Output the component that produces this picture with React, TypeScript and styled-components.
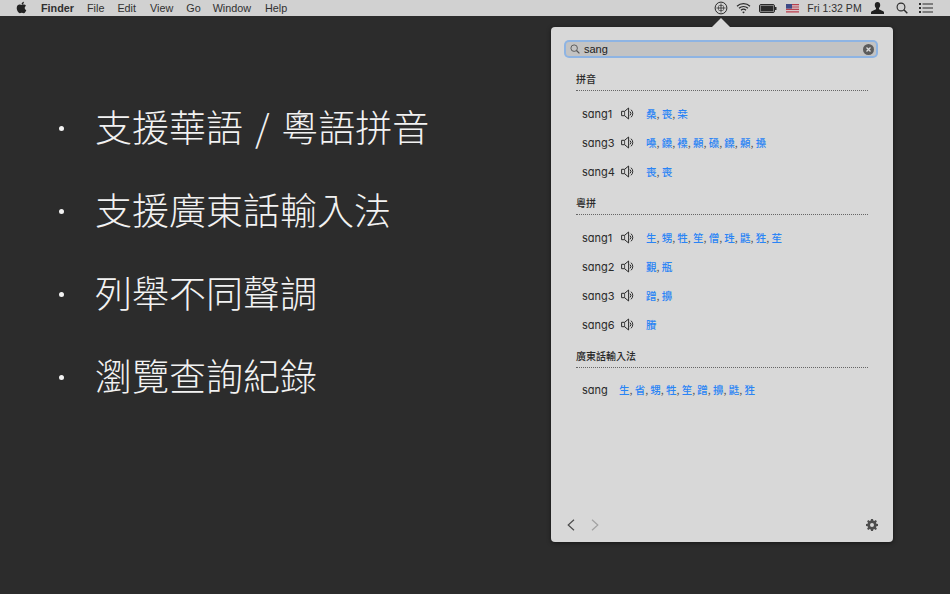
import * as React from 'react';
import styled, { createGlobalStyle } from 'styled-components';
import { FaApple } from 'react-icons/fa';

const GlobalStyle = createGlobalStyle`
  html, body {
    margin: 0;
    padding: 0;
    height: 100%;
    background: #2c2c2c;
    overflow: hidden;
  }
  #root {
    height: 100%;
  }
`;

const CJK = `"Noto Sans CJK TC", "Noto Sans CJK SC", sans-serif`;

const Desktop = styled.div`
  width: 950px;
  height: 594px;
  display: flex;
  flex-direction: column;
  background: #2c2c2c;
`;

const MenuBar = styled.header`
  height: 16px;
  flex: none;
  display: flex;
  align-items: center;
  background: #d1d1d1;
  font-family: "Liberation Sans", Arial, sans-serif;
  font-size: 10.8px;
  color: #303030;
  padding: 0 13px 0 15px;
`;

const AppleMark = styled.span`
  display: flex;
  width: 26px;
  margin-bottom: 1px;
  font-size: 13px;
  color: #222;
`;

const MenuItem = styled.span<{ $bold?: boolean; $gap: number }>`
  margin-right: ${({ $gap }) => $gap}px;
  font-weight: ${({ $bold }) => ($bold ? 700 : 400)};
  white-space: nowrap;
`;

const StatusArea = styled.div`
  margin-left: auto;
  display: flex;
  align-items: center;
`;

const StatusSlot = styled.span<{ $width: number }>`
  display: flex;
  justify-content: center;
  align-items: center;
  width: ${({ $width }) => $width}px;
`;

const Clock = styled.span`
  width: 61px;
  font-size: 10.5px;
  text-align: center;
  white-space: nowrap;
`;

const Main = styled.main`
  flex: 1;
  display: flex;
  align-items: flex-start;
`;

const Slide = styled.ul`
  width: 551px;
  flex: none;
  margin: 0;
  padding: 85px 0 0 59px;
  box-sizing: border-box;
  list-style: none;
  display: flex;
  flex-direction: column;
`;

const SlideItem = styled.li`
  height: 83px;
  display: flex;
  align-items: flex-start;
  color: #f2f2f2;
  font-family: ${CJK};
  font-weight: 300;
  font-size: 37px;
  line-height: 50px;
  word-spacing: 3.7px;
  white-space: pre;
`;

const Dot = styled.span`
  width: 5px;
  height: 5px;
  margin-top: 25px;
  margin-right: 31px;
  border-radius: 50%;
  background: #f2f2f2;
  flex: none;
`;

const Popover = styled.section`
  position: relative;
  width: 342px;
  height: 515px;
  margin-top: 11px;
  box-sizing: border-box;
  padding-top: 15px;
  background: #d8d8d8;
  border-radius: 4px;
  box-shadow: 0 1px 4px rgba(0, 0, 0, 0.5);
  display: flex;
  flex-direction: column;
  font-family: Inter, "Noto Sans", sans-serif;
  color: #222;
`;

const Caret = styled.span`
  position: absolute;
  top: -9px;
  left: 161px;
  width: 0;
  height: 0;
  border-left: 9px solid transparent;
  border-right: 9px solid transparent;
  border-bottom: 9px solid #d8d8d8;
`;

const SearchBox = styled.div`
  height: 14px;
  flex: none;
  margin: 0 17px 0 15px;
  display: flex;
  align-items: center;
  gap: 4px;
  padding: 0 2px 0 4px;
  background: #c3c3c3;
  border-radius: 3px;
  box-shadow: 0 0 0 2px #8eb4e3;
  font-size: 11px;
  color: #1c1c1c;
`;

const SearchText = styled.span`
  flex: 1;
  font-family: "Liberation Sans", Arial, sans-serif;
`;

const Results = styled.div`
  flex: 1;
  display: flex;
  flex-direction: column;
  padding: 16px 25px 0 25px;
`;

const SectionTitle = styled.h2<{ $top: number }>`
  margin: ${({ $top }) => $top}px 0 0;
  height: 18px;
  line-height: 14px;
  font-family: ${CJK};
  font-size: 10px;
  font-weight: 500;
  color: #2a2a2a;
  border-bottom: 1px dotted #666;
`;

const Rows = styled.div<{ $plain?: boolean }>`
  display: flex;
  flex-direction: column;
  padding-top: ${({ $plain }) => ($plain ? 7 : 8)}px;
`;

const Row = styled.div`
  height: 29px;
  display: flex;
  align-items: center;
  padding-left: 6px;
`;

const Syllable = styled.span<{ $width: number }>`
  width: ${({ $width }) => $width}px;
  flex: none;
  font-size: 11px;
  font-feature-settings: "cv11";
  color: #2a2a2a;
`;

const Chars = styled.span`
  margin-left: 12px;
  font-family: ${CJK};
  font-size: 10.5px;
  font-weight: 500;
  color: #2a84f5;
  white-space: nowrap;
`;

const Sep = styled.span`
  color: #555;
  font-weight: 400;
  margin-right: 2.25px;
`;

const Footer = styled.footer`
  height: 34px;
  flex: none;
  display: flex;
  align-items: center;
  padding: 0 15px 0 16px;
`;

const NavButton = styled.span`
  display: flex;
  margin-right: 16px;
`;

const Gear = styled.span`
  display: flex;
  margin-left: auto;
`;

const AddonIcon = () => (
  <svg width="14" height="14" viewBox="0 0 14 14" fill="none" stroke="#2b2b2b">
    <circle cx="7" cy="7" r="5.9" strokeWidth="1" />
    <path d="M7 2.5v9M2.5 7h9" strokeWidth="0.8" />
    <rect x="4.5" y="4.5" width="5" height="5" rx="1" strokeWidth="0.6" />
  </svg>
);

const WifiIcon = () => (
  <svg width="15" height="12" viewBox="0 0 15 12" fill="none" stroke="#2b2b2b" strokeWidth="1.2">
    <path d="M1 4.2a9.4 9.4 0 0 1 13 0M3 6.3a6.5 6.5 0 0 1 9 0M5 8.3a3.6 3.6 0 0 1 5 0" />
    <path d="M7.5 11.4 6.2 10a1.9 1.9 0 0 1 2.6 0z" fill="#2b2b2b" stroke="none" />
  </svg>
);

const BatteryIcon = () => (
  <svg width="18" height="9" viewBox="0 0 18 9">
    <rect x="0.5" y="0.5" width="15" height="8" rx="1.5" fill="#d3d3d3" stroke="#2b2b2b" />
    <rect x="1.5" y="1.5" width="13" height="6" fill="#2b2b2b" />
    <rect x="16" y="3" width="1.5" height="3" fill="#2b2b2b" />
  </svg>
);

const FlagIcon = () => (
  <svg width="13" height="9" viewBox="0 0 13 9">
    <rect width="13" height="9" fill="#d8c8cc" />
    <path d="M0 .6h13M0 3h13M0 5.4h13M0 7.8h13" stroke="#b8404e" strokeWidth="1.2" />
    <rect width="6" height="4.6" fill="#3d4a86" />
  </svg>
);

const UserIcon = () => (
  <svg width="13" height="12" viewBox="0 0 13 12" fill="#1f1f1f">
    <path d="M6.5 0C4.8 0 3.8 1.3 3.8 3c0 1.3.5 2.4 1.2 3.1v1.1L.8 9.2C.3 9.5 0 9.9 0 10.4V12h13v-1.6c0-.5-.3-.9-.8-1.2L8 7.2V6.1C8.7 5.4 9.2 4.3 9.2 3 9.2 1.3 8.2 0 6.5 0z" />
  </svg>
);

const MagnifierIcon = ({ size, color }: { size: number; color: string }) => (
  <svg width={size} height={size} viewBox="0 0 12 12" fill="none" stroke={color} strokeWidth="1.1">
    <circle cx="5" cy="5" r="3.9" />
    <path d="M7.8 7.8 11.3 11.3" strokeWidth="1.4" />
  </svg>
);

const ListIcon = () => (
  <svg width="14" height="10" viewBox="0 0 14 10" fill="#2b2b2b">
    <path d="M0 0h2v2H0zM0 4h2v2H0zM0 8h2v2H0zM3.5 .5H14v1H3.5zM3.5 4.5H14v1H3.5zM3.5 8.5H14v1H3.5z" />
  </svg>
);

const ClearIcon = () => (
  <svg width="11" height="11" viewBox="0 0 11 11">
    <circle cx="5.5" cy="5.5" r="5.5" fill="#5c5c5c" />
    <path d="M3.5 3.5l4 4M7.5 3.5l-4 4" stroke="#dcdcdc" strokeWidth="1.3" />
  </svg>
);

const SpeakerIcon = () => (
  <svg width="13" height="13" viewBox="0 0 13 13" fill="none" stroke="#2a2a2a" strokeWidth="1">
    <path d="M.6 4.3h3L7.6 1v11L3.6 8.7h-3z" />
    <path d="M3.6 4.3v4.4" strokeWidth="0.8" />
    <path d="M9 4.6a2.6 2.6 0 0 1 0 3.8M10 2.7a5 5 0 0 1 0 7.6" />
  </svg>
);

const Chevron = ({ dir, color }: { dir: 'left' | 'right'; color: string }) => (
  <svg width="8" height="12" viewBox="0 0 8 12" fill="none" stroke={color} strokeWidth="1.2">
    <path d={dir === 'left' ? 'M7 .8 1.2 6 7 11.2' : 'M1 .8 6.8 6 1 11.2'} />
  </svg>
);

const GearIcon = () => (
  <svg width="12" height="12" viewBox="0 0 12 12">
    <path
      fill="#4e4e4e"
      fillRule="evenodd"
      d="M5 0h2l.3 1.6 1 .4L9.7 1.1l1.2 1.2L10 3.7l.4 1L12 5v2l-1.6.3-.4 1 .9 1.4-1.2 1.2L8.3 10l-1 .4L7 12H5l-.3-1.6-1-.4-1.4.9-1.2-1.2L2 8.3l-.4-1L0 7V5l1.6-.3.4-1-.9-1.4 1.2-1.2L3.7 2l1-.4zM6 4a2 2 0 1 0 0 4 2 2 0 0 0 0-4z"
    />
  </svg>
);

const menus = [
  { label: 'File', gap: 13 },
  { label: 'Edit', gap: 14 },
  { label: 'View', gap: 13 },
  { label: 'Go', gap: 12 },
  { label: 'Window', gap: 14 },
  { label: 'Help', gap: 0 },
];

const slideItems = ['支援華語 / 粵語拼音', '支援廣東話輸入法', '列舉不同聲調', '瀏覽查詢紀錄'];

const sections = [
  {
    title: '拼音',
    top: 0,
    rows: [
      { name: 'sang1', chars: ['桑', '喪', '桒'] },
      { name: 'sang3', chars: ['嗓', '鎟', '褬', '顙', '磉', '鎟', '顙', '搡'] },
      { name: 'sang4', chars: ['喪', '喪'] },
    ],
  },
  {
    title: '粵拼',
    top: 10,
    rows: [
      { name: 'sang1', chars: ['生', '甥', '牲', '笙', '僧', '珄', '鼪', '狌', '苼'] },
      { name: 'sang2', chars: ['覲', '瓶'] },
      { name: 'sang3', chars: ['蹭', '擤'] },
      { name: 'sang6', chars: ['賸'] },
    ],
  },
  {
    title: '廣東話輸入法',
    top: 10,
    plain: true,
    rows: [{ name: 'sang', chars: ['生', '省', '甥', '牲', '笙', '蹭', '擤', '鼪', '狌'] }],
  },
];

const App = () => (
  <Desktop>
    <GlobalStyle />
    <MenuBar>
      <AppleMark>
        <FaApple />
      </AppleMark>
      <MenuItem $bold={true} $gap={13}>Finder</MenuItem>
      {menus.map((menu) => (
        <MenuItem key={menu.label} $gap={menu.gap}>{menu.label}</MenuItem>
      ))}
      <StatusArea>
        <StatusSlot $width={18}><AddonIcon /></StatusSlot>
        <StatusSlot $width={26}><WifiIcon /></StatusSlot>
        <StatusSlot $width={24}><BatteryIcon /></StatusSlot>
        <StatusSlot $width={24}><FlagIcon /></StatusSlot>
        <Clock>Fri 1:32 PM</Clock>
        <StatusSlot $width={24}><UserIcon /></StatusSlot>
        <StatusSlot $width={26}><MagnifierIcon size={12} color="#2b2b2b" /></StatusSlot>
        <StatusSlot $width={22}><ListIcon /></StatusSlot>
      </StatusArea>
    </MenuBar>
    <Main>
      <Slide>
        {slideItems.map((item) => (
          <SlideItem key={item}>
            <Dot />
            {item}
          </SlideItem>
        ))}
      </Slide>
      <Popover>
        <Caret />
        <SearchBox>
          <MagnifierIcon size={10} color="#555" />
          <SearchText>sang</SearchText>
          <ClearIcon />
        </SearchBox>
        <Results>
          {sections.map((section) => (
            <div key={section.title}>
              <SectionTitle $top={section.top}>{section.title}</SectionTitle>
              <Rows $plain={section.plain}>
                {section.rows.map((row) => (
                  <Row key={row.name}>
                    <Syllable $width={section.plain ? 25 : 39}>{row.name}</Syllable>
                    {section.plain ? null : <SpeakerIcon />}
                    <Chars>
                      {row.chars.map((ch, i) => (
                        <React.Fragment key={i}>
                          {ch}
                          {i < row.chars.length - 1 ? <Sep>,</Sep> : null}
                        </React.Fragment>
                      ))}
                    </Chars>
                  </Row>
                ))}
              </Rows>
            </div>
          ))}
        </Results>
        <Footer>
          <NavButton><Chevron dir="left" color="#4c4c4c" /></NavButton>
          <NavButton><Chevron dir="right" color="#a2a2a2" /></NavButton>
          <Gear><GearIcon /></Gear>
        </Footer>
      </Popover>
    </Main>
  </Desktop>
);

export default App;
